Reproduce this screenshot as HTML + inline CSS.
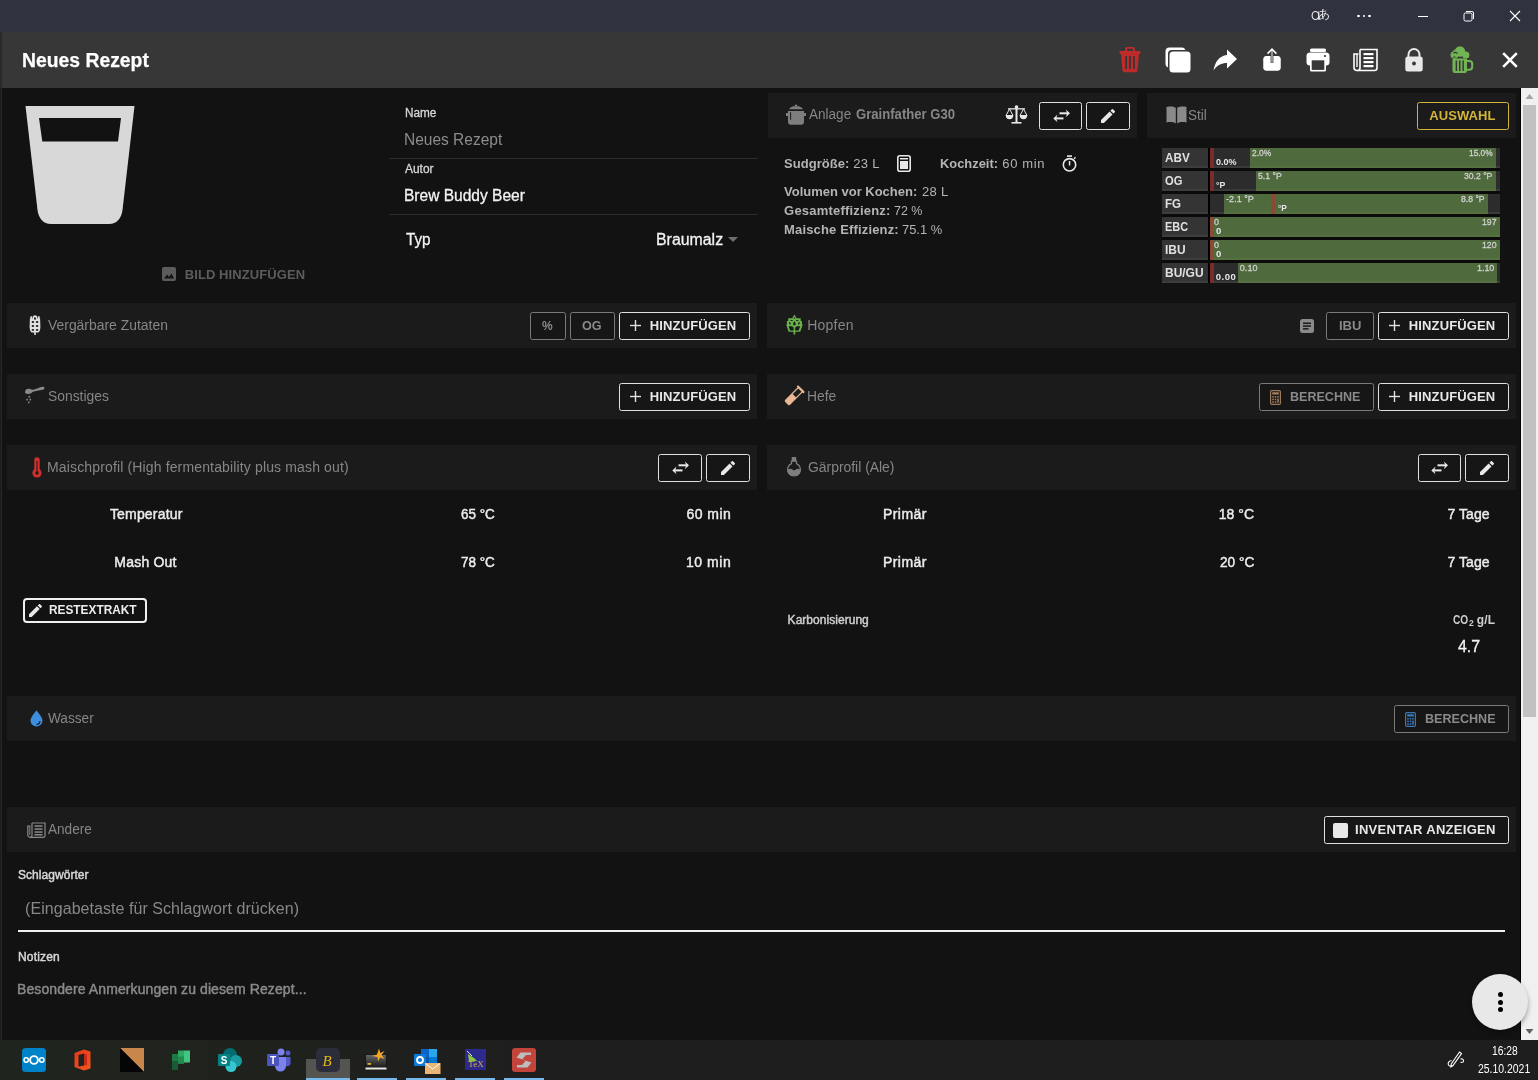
<!DOCTYPE html>
<html><head><meta charset="utf-8"><title>Neues Rezept</title>
<style>
html,body{margin:0;padding:0;width:1538px;height:1080px;overflow:hidden;background:#121212;font-family:'Liberation Sans', sans-serif}
svg{display:block}
</style></head><body><div style="position:absolute;left:0;top:0;width:1538px;height:1080px;will-change:transform">
<div style="position:absolute;left:0px;top:0px;width:1538px;height:32px;background:#30333f;"></div>
<div style="position:absolute;left:0px;top:32px;width:1538px;height:56px;background:#373737;"></div>
<div style="position:absolute;left:0px;top:88px;width:2px;height:952px;background:#1c1c1c;"></div>
<div style="position:absolute;left:1px;top:88px;width:1px;height:952px;background:#262626;"></div>
<div style="position:absolute;left:0px;top:32px;width:2px;height:56px;background:#2a2a2a;"></div>
<div style="position:absolute;left:1520px;top:88px;width:1px;height:952px;background:#000;"></div>
<div style="position:absolute;left:1521px;top:88px;width:17px;height:952px;background:#f0f0f0;"></div>
<div style="position:absolute;left:1523px;top:105px;width:13px;height:612px;background:#c1c1c1;"></div>
<svg style="position:absolute;left:1525px;top:94px;" width="9" height="5" viewBox="0 0 9 5"><path d="M0.5 5 L4.5 0 L8.5 5Z" fill="#a3a3a3"/></svg>
<svg style="position:absolute;left:1525px;top:1029px;" width="9" height="5" viewBox="0 0 9 5"><path d="M0.5 0 L4.5 5 L8.5 0Z" fill="#606060"/></svg>
<div style="position:absolute;left:0px;top:1040px;width:1538px;height:40px;background:linear-gradient(90deg,#20241e 0px,#1f211d 300px,#1e1e1e 560px,#1e1e1e 1538px);"></div>
<div style="position:absolute;left:768px;top:93px;width:369px;height:45px;background:#1b1b1b;"></div>
<div style="position:absolute;left:1147px;top:93px;width:369px;height:45px;background:#1b1b1b;"></div>
<div style="position:absolute;left:7px;top:303px;width:750px;height:45px;background:#1b1b1b;"></div>
<div style="position:absolute;left:767px;top:303px;width:749px;height:45px;background:#1b1b1b;"></div>
<div style="position:absolute;left:7px;top:374px;width:750px;height:45px;background:#1b1b1b;"></div>
<div style="position:absolute;left:767px;top:374px;width:749px;height:45px;background:#1b1b1b;"></div>
<div style="position:absolute;left:7px;top:445px;width:750px;height:45px;background:#1b1b1b;"></div>
<div style="position:absolute;left:767px;top:445px;width:749px;height:45px;background:#1b1b1b;"></div>
<div style="position:absolute;left:7px;top:696px;width:1509px;height:45px;background:#1b1b1b;"></div>
<div style="position:absolute;left:7px;top:807px;width:1509px;height:45px;background:#1b1b1b;"></div>
<svg style="position:absolute;left:1311px;top:10px;" width="10" height="11" viewBox="0 0 10 11"><ellipse cx="4.4" cy="5.5" rx="3.3" ry="4" fill="none" stroke="#f0f0f0" stroke-width="1.1"/><rect x="7.2" y="1.5" width="1.1" height="8.5" fill="#f0f0f0"/></svg>
<div style="position:absolute;left:1357.3px;top:14.8px;width:2.4px;height:2.4px;background:#ffffff;border-radius:50%"></div>
<div style="position:absolute;left:1362.8px;top:14.8px;width:2.4px;height:2.4px;background:#ffffff;border-radius:50%"></div>
<div style="position:absolute;left:1368.3px;top:14.8px;width:2.4px;height:2.4px;background:#ffffff;border-radius:50%"></div>
<div style="position:absolute;left:1418px;top:16px;width:10px;height:1px;background:#ffffff;"></div>
<svg style="position:absolute;left:1463px;top:10px;" width="12" height="12" viewBox="0 0 12 12"><rect x="1" y="3" width="8" height="8" rx="1.5" fill="none" stroke="#fff" stroke-width="1"/><path d="M3 1.5 H9 A1.5 1.5 0 0 1 10.5 3 V9" fill="none" stroke="#fff" stroke-width="1"/></svg>
<svg style="position:absolute;left:1509px;top:10px;" width="12" height="12" viewBox="0 0 12 12"><path d="M1 1 L11 11 M11 1 L1 11" stroke="#fff" stroke-width="1.1"/></svg>
<svg style="position:absolute;left:1119px;top:47px;" width="22" height="26" viewBox="0 0 22 26"><path d="M7 4 V2 A1.5 1.5 0 0 1 8.5 0.8 H13.5 A1.5 1.5 0 0 1 15 2 V4" fill="none" stroke="#bf2a2a" stroke-width="2"/><rect x="0.5" y="4" width="21" height="3" rx="1" fill="#bf2a2a"/><path d="M2 7 H20 L18.5 23.5 A2 2 0 0 1 16.5 25.3 H5.5 A2 2 0 0 1 3.5 23.5 Z" fill="#bf2a2a"/><rect x="6.2" y="9" width="1.8" height="13" fill="#373737"/><rect x="10.1" y="9" width="1.8" height="13" fill="#373737"/><rect x="14" y="9" width="1.8" height="13" fill="#373737"/></svg>
<svg style="position:absolute;left:1165px;top:47px;" width="26" height="26" viewBox="0 0 26 26"><rect x="0.5" y="0.5" width="20" height="20" rx="4" fill="#fff"/><rect x="3" y="3" width="23" height="23" rx="4" fill="#373737"/><rect x="4.5" y="4.5" width="21" height="21" rx="3.5" fill="#fff"/></svg>
<svg style="position:absolute;left:1213px;top:49px;" width="25" height="22" viewBox="0 0 25 22"><path d="M24 10 L14 0.5 V6 C6 7 2 13 0.5 21.5 C4 16 8.5 14 14 14 V19.5 Z" fill="#fff"/></svg>
<svg style="position:absolute;left:1263px;top:48px;" width="18" height="23" viewBox="0 0 18 23"><path d="M5.5 8 H3.2 A2.7 2.7 0 0 0 0.5 10.7 V19.8 A2.7 2.7 0 0 0 3.2 22.5 H14.8 A2.7 2.7 0 0 0 17.5 19.8 V10.7 A2.7 2.7 0 0 0 14.8 8 H12.5" fill="#fff"/><path d="M0.5 11 H17.5 V12 H0.5Z" fill="#fff"/><rect x="0.5" y="9" width="17" height="13.5" rx="2.7" fill="#fff"/><rect x="7.6" y="6" width="2.8" height="9" fill="#373737"/><rect x="8.3" y="2.2" width="1.4" height="12.5" fill="#bdbdbd"/><path d="M4.6 5.6 L9 1.2 L13.4 5.6" fill="none" stroke="#fff" stroke-width="1.6"/></svg>
<svg style="position:absolute;left:1306px;top:48px;" width="24" height="24" viewBox="0 0 24 24"><rect x="4" y="0.5" width="16" height="3.5" rx="1.5" fill="#fff"/><rect x="0.5" y="4.5" width="23" height="13" rx="3.5" fill="#fff"/><rect x="4" y="11" width="16" height="12.5" rx="1.5" fill="#fff"/><rect x="5.7" y="12.3" width="12.6" height="9.6" fill="#373737"/><circle cx="19" cy="8" r="1.1" fill="#373737"/></svg>
<svg style="position:absolute;left:1353px;top:48px;" width="26" height="24" viewBox="0 0 26 24"><path d="M7 1.5 H24 V20 A2.5 2.5 0 0 1 21.5 22.5 H4 A3 3 0 0 1 1 19.5 V6 H5.5" fill="none" stroke="#fff" stroke-width="1.6"/><path d="M7 1.5 V20 A2.5 2.5 0 0 1 4.5 22.5" fill="none" stroke="#fff" stroke-width="1.6"/><path d="M4 6 V19" stroke="#fff" stroke-width="1.4"/><rect x="10.5" y="5" width="10" height="2.2" fill="#fff"/><rect x="10.5" y="9" width="10" height="2.2" fill="#fff"/><rect x="10.5" y="13" width="10" height="2.2" fill="#fff"/><rect x="10.5" y="17" width="10" height="2.2" fill="#fff"/></svg>
<svg style="position:absolute;left:1405px;top:48px;" width="18" height="24" viewBox="0 0 18 24"><path d="M3.5 10 V6.5 A5.5 5.5 0 0 1 14.5 6.5 V10" fill="none" stroke="#e8e8e8" stroke-width="2"/><rect x="0.3" y="8.5" width="17.4" height="15" rx="2.5" fill="#e8e8e8"/><circle cx="9" cy="15.5" r="1.9" fill="#373737"/></svg>
<svg style="position:absolute;left:1450px;top:46px;" width="24" height="28" viewBox="0 0 24 28"><g fill="#72b353"><path d="M2.5 12.5 H17 V24.8 A2.2 2.2 0 0 1 14.8 27 H4.7 A2.2 2.2 0 0 1 2.5 24.8 Z"/><circle cx="4.3" cy="9" r="3.8"/><circle cx="10" cy="5.5" r="5.2"/><circle cx="15.8" cy="9" r="3.6"/><circle cx="6.5" cy="6.5" r="3.3"/></g><path d="M17 15 H19.2 A3 3 0 0 1 22.2 18 V20.8 A3 3 0 0 1 19.2 23.8 H17" fill="none" stroke="#72b353" stroke-width="2.1"/><g fill="#373737"><rect x="5.6" y="14.5" width="1.5" height="10.5"/><rect x="9" y="14.5" width="1.5" height="10.5"/><rect x="12.4" y="14.5" width="1.5" height="10.5"/></g><path d="M3.5 7.5 C4.5 6 6.5 6 7.5 7.8" fill="none" stroke="#363636" stroke-width="1.1"/><path d="M2.5 12 C3.5 11 4.5 10.5 5.5 11.2" fill="none" stroke="#363636" stroke-width="1"/></svg>
<svg style="position:absolute;left:1502px;top:52px;" width="16" height="16" viewBox="0 0 16 16"><path d="M1.2 1.2 L14.8 14.8 M14.8 1.2 L1.2 14.8" stroke="#fff" stroke-width="2.6"/></svg>
<svg style="position:absolute;left:25px;top:106px;" width="110" height="118" viewBox="0 0 110 118"><path d="M0.5 0 H109.5 L97.5 104 C96.5 112 92 118 84 118 H26 C18 118 13.5 112 12.5 104 Z" fill="#d8d8d8"/><path d="M14 12 H96 L93 35.5 H17.3 Z" fill="#121212"/></svg>
<svg style="position:absolute;left:162px;top:267px;" width="14" height="14" viewBox="0 0 14 14"><rect x="0" y="0" width="14" height="14" rx="2" fill="#5c5c5c"/><path d="M2 11.5 L5 7.5 L7 10 L9.5 6.5 L12 11.5 Z" fill="#121212"/></svg>
<div style="position:absolute;left:389px;top:158px;width:369px;height:1px;background:#2c2c2c;"></div>
<div style="position:absolute;left:389px;top:214px;width:369px;height:1px;background:#2c2c2c;"></div>
<svg style="position:absolute;left:728px;top:237px;" width="10" height="5" viewBox="0 0 10 5"><path d="M0 0 H10 L5 5Z" fill="#6e6e6e"/></svg>
<svg style="position:absolute;left:782px;top:101px;" width="28" height="27" viewBox="0 0 28 27"><g fill="#7e7e7e"><ellipse cx="14" cy="4.6" rx="1.3" ry="1"/><path d="M6.8 8.2 Q8.8 5.6 11.2 5.2 H16.8 Q19.2 5.6 21.2 8.2 Z"/><path d="M6 10 H22 V20.8 A3 3 0 0 1 19 23.8 H9 A3 3 0 0 1 6 20.8 Z"/><rect x="4" y="12" width="20" height="3"/></g><rect x="8.1" y="11.2" width="1" height="7.6" fill="#1b1b1b"/></svg>
<svg style="position:absolute;left:1005px;top:105px;" width="23" height="19" viewBox="0 0 23 19"><rect x="10.5" y="1" width="2" height="16" fill="#e8e8e8"/><circle cx="11.5" cy="2" r="1.8" fill="#e8e8e8"/><rect x="3" y="3.2" width="17" height="1.3" fill="#e8e8e8"/><path d="M4.5 4 L1 10.5 H8 Z" fill="none" stroke="#e8e8e8" stroke-width="1"/><path d="M18.5 4 L15 10.5 H22 Z" fill="none" stroke="#e8e8e8" stroke-width="1"/><path d="M0.8 10.5 A3.7 3.7 0 0 0 8.2 10.5 Z" fill="#e8e8e8"/><path d="M14.8 10.5 A3.7 3.7 0 0 0 22.2 10.5 Z" fill="#e8e8e8"/><rect x="6.5" y="17" width="10" height="1.6" fill="#e8e8e8"/></svg>
<div style="position:absolute;left:1039px;top:102px;width:43px;height:28px;box-sizing:border-box;border:1.5px solid #e0e0e0;border-radius:2.5px;background:#161616"></div>
<svg style="position:absolute;left:1052.5px;top:109px;" width="18" height="15" viewBox="0 0 18 15"><g fill="#e8e8e8"><rect x="6.5" y="3.3" width="9" height="2"/><path d="M17 4.3 L12.8 0.4 L14.2 4.3 L12.8 8.2 Z"/><rect x="2.5" y="8.4" width="8" height="2"/><path d="M0.3 9.4 L4.5 5.5 L3.1 9.4 L4.5 13.3 Z"/></g></svg>
<div style="position:absolute;left:1086px;top:102px;width:44px;height:28px;box-sizing:border-box;border:1.5px solid #e0e0e0;border-radius:2.5px;background:#161616"></div>
<svg style="position:absolute;left:1101px;top:109px;" width="14" height="14" viewBox="3 3 18 18"><path d="M20.71,7.04C21.1,6.65 21.1,6 20.71,5.63L18.37,3.29C18,2.9 17.35,2.9 16.96,3.29L15.12,5.12L18.87,8.87M3,17.25V21H6.75L17.81,9.93L14.06,6.18L3,17.25Z" fill="#e8e8e8"/></svg>
<svg style="position:absolute;left:897px;top:155px;" width="14" height="17" viewBox="0 0 14 17"><rect x="0.8" y="0.8" width="12.4" height="15.4" rx="2" fill="none" stroke="#e8e8e8" stroke-width="1.6"/><rect x="3" y="3" width="8" height="1.5" fill="#e8e8e8"/><rect x="3" y="6" width="8" height="8" fill="#e8e8e8"/></svg>
<svg style="position:absolute;left:1062px;top:155px;" width="15" height="17" viewBox="0 0 15 17"><circle cx="7.5" cy="9.8" r="6.2" fill="none" stroke="#e8e8e8" stroke-width="1.6"/><rect x="5" y="0.3" width="5" height="1.6" fill="#e8e8e8"/><rect x="6.8" y="6" width="1.5" height="4.5" fill="#e8e8e8"/><path d="M12 3.8 L13.5 2.3" stroke="#e8e8e8" stroke-width="1.5"/></svg>
<svg style="position:absolute;left:1166px;top:106px;" width="21" height="18" viewBox="0 0 21 18"><path d="M0.5 1 C4 0.2 7.5 0.5 9.8 1.8 V17.5 C7.5 16 4 15.8 0.5 16.5 Z" fill="#8a8a8a"/><path d="M20.5 1 C17 0.2 13.5 0.5 11.2 1.8 V17.5 C13.5 16 17 15.8 20.5 16.5 Z" fill="#8a8a8a"/></svg>
<div style="position:absolute;left:1417px;top:102px;width:92px;height:28px;box-sizing:border-box;border:1.5px solid #d4b43a;border-radius:2.5px;background:#1b1b1b"></div>
<div style="position:absolute;left:1162px;top:168px;width:338px;height:3px;background:#0b0b0b;"></div>
<div style="position:absolute;left:1162px;top:191px;width:338px;height:3px;background:#0b0b0b;"></div>
<div style="position:absolute;left:1162px;top:214px;width:338px;height:3px;background:#0b0b0b;"></div>
<div style="position:absolute;left:1162px;top:237px;width:338px;height:3px;background:#0b0b0b;"></div>
<div style="position:absolute;left:1162px;top:260px;width:338px;height:3px;background:#0b0b0b;"></div>
<div style="position:absolute;left:1162px;top:148px;width:46px;height:18px;background:#343434;"></div>
<div style="position:absolute;left:1162px;top:166px;width:46px;height:2px;background:#3d3d3d;"></div>
<div style="position:absolute;left:1208px;top:148px;width:2px;height:20px;background:#000;"></div>
<div style="position:absolute;left:1210px;top:148px;width:290px;height:18px;background:#2c2c2c;"></div>
<div style="position:absolute;left:1210px;top:166px;width:290px;height:2px;background:#3a3a38;"></div>
<div style="position:absolute;left:1250px;top:148px;width:246px;height:18px;background:#4f6a3c;"></div>
<div style="position:absolute;left:1250px;top:166px;width:246px;height:2px;background:#56713f;"></div>
<div style="position:absolute;left:1210px;top:148px;width:4px;height:20px;background:#7a2c2b;"></div>
<div style="position:absolute;left:1162px;top:171px;width:46px;height:18px;background:#343434;"></div>
<div style="position:absolute;left:1162px;top:189px;width:46px;height:2px;background:#3d3d3d;"></div>
<div style="position:absolute;left:1208px;top:171px;width:2px;height:20px;background:#000;"></div>
<div style="position:absolute;left:1210px;top:171px;width:290px;height:18px;background:#2c2c2c;"></div>
<div style="position:absolute;left:1210px;top:189px;width:290px;height:2px;background:#3a3a38;"></div>
<div style="position:absolute;left:1256px;top:171px;width:240px;height:18px;background:#4f6a3c;"></div>
<div style="position:absolute;left:1256px;top:189px;width:240px;height:2px;background:#56713f;"></div>
<div style="position:absolute;left:1210px;top:171px;width:4px;height:20px;background:#7a2c2b;"></div>
<div style="position:absolute;left:1162px;top:194px;width:46px;height:18px;background:#343434;"></div>
<div style="position:absolute;left:1162px;top:212px;width:46px;height:2px;background:#3d3d3d;"></div>
<div style="position:absolute;left:1208px;top:194px;width:2px;height:20px;background:#000;"></div>
<div style="position:absolute;left:1210px;top:194px;width:290px;height:18px;background:#2c2c2c;"></div>
<div style="position:absolute;left:1210px;top:212px;width:290px;height:2px;background:#3a3a38;"></div>
<div style="position:absolute;left:1224px;top:194px;width:264px;height:18px;background:#4f6a3c;"></div>
<div style="position:absolute;left:1224px;top:212px;width:264px;height:2px;background:#56713f;"></div>
<div style="position:absolute;left:1271px;top:194px;width:4px;height:20px;background:#8a4a33;"></div>
<div style="position:absolute;left:1162px;top:217px;width:46px;height:18px;background:#343434;"></div>
<div style="position:absolute;left:1162px;top:235px;width:46px;height:2px;background:#3d3d3d;"></div>
<div style="position:absolute;left:1208px;top:217px;width:2px;height:20px;background:#000;"></div>
<div style="position:absolute;left:1210px;top:217px;width:290px;height:18px;background:#2c2c2c;"></div>
<div style="position:absolute;left:1210px;top:235px;width:290px;height:2px;background:#3a3a38;"></div>
<div style="position:absolute;left:1210px;top:217px;width:290px;height:18px;background:#4f6a3c;"></div>
<div style="position:absolute;left:1210px;top:235px;width:290px;height:2px;background:#56713f;"></div>
<div style="position:absolute;left:1210px;top:217px;width:4px;height:20px;background:#8a4a33;"></div>
<div style="position:absolute;left:1162px;top:240px;width:46px;height:18px;background:#343434;"></div>
<div style="position:absolute;left:1162px;top:258px;width:46px;height:2px;background:#3d3d3d;"></div>
<div style="position:absolute;left:1208px;top:240px;width:2px;height:20px;background:#000;"></div>
<div style="position:absolute;left:1210px;top:240px;width:290px;height:18px;background:#2c2c2c;"></div>
<div style="position:absolute;left:1210px;top:258px;width:290px;height:2px;background:#3a3a38;"></div>
<div style="position:absolute;left:1210px;top:240px;width:290px;height:18px;background:#4f6a3c;"></div>
<div style="position:absolute;left:1210px;top:258px;width:290px;height:2px;background:#56713f;"></div>
<div style="position:absolute;left:1210px;top:240px;width:4px;height:20px;background:#8a4a33;"></div>
<div style="position:absolute;left:1162px;top:263px;width:46px;height:18px;background:#343434;"></div>
<div style="position:absolute;left:1162px;top:281px;width:46px;height:2px;background:#3d3d3d;"></div>
<div style="position:absolute;left:1208px;top:263px;width:2px;height:20px;background:#000;"></div>
<div style="position:absolute;left:1210px;top:263px;width:290px;height:18px;background:#2c2c2c;"></div>
<div style="position:absolute;left:1210px;top:281px;width:290px;height:2px;background:#3a3a38;"></div>
<div style="position:absolute;left:1238px;top:263px;width:259px;height:18px;background:#4f6a3c;"></div>
<div style="position:absolute;left:1238px;top:281px;width:259px;height:2px;background:#56713f;"></div>
<div style="position:absolute;left:1210px;top:263px;width:4px;height:20px;background:#7a2c2b;"></div>
<svg style="position:absolute;left:29px;top:315px;" width="12" height="20" viewBox="0 0 12 20"><g fill="#e0e0e0"><path d="M0.9 3.5 H11.1 L11.4 12 Q11.2 16.8 9.3 17.4 H2.7 Q0.8 16.8 0.6 12 Z"/><rect x="1.3" y="1.3" width="2" height="3"/><rect x="8.7" y="1.3" width="2" height="3"/><ellipse cx="6" cy="3.2" rx="2.3" ry="2.9"/><rect x="5.2" y="16.5" width="1.6" height="3.5"/></g><g fill="#1b1b1b"><ellipse cx="3.9" cy="7" rx="1.3" ry="0.95"/><ellipse cx="8.1" cy="7" rx="1.3" ry="0.95"/><ellipse cx="3.9" cy="11" rx="1.3" ry="0.95"/><ellipse cx="8.1" cy="11" rx="1.3" ry="0.95"/><ellipse cx="3.9" cy="14.9" rx="1.3" ry="0.95"/><ellipse cx="8.1" cy="14.9" rx="1.3" ry="0.95"/><ellipse cx="6" cy="3.6" rx="0.9" ry="1.3"/></g></svg>
<div style="position:absolute;left:530px;top:312px;width:36px;height:28px;box-sizing:border-box;border:1.2px solid #7a7a7a;border-radius:2.5px;background:#161616"></div>
<div style="position:absolute;left:570px;top:312px;width:45px;height:28px;box-sizing:border-box;border:1.2px solid #7a7a7a;border-radius:2.5px;background:#161616"></div>
<div style="position:absolute;left:619px;top:312px;width:131px;height:28px;box-sizing:border-box;border:1.5px solid #e0e0e0;border-radius:2.5px;background:#161616"></div>
<svg style="position:absolute;left:629.6px;top:319.5px;" width="11" height="11" viewBox="0 0 11 11"><rect x="4.8" y="0" width="1.4" height="11" fill="#e0e0e0"/><rect x="0" y="4.8" width="11" height="1.4" fill="#e0e0e0"/></svg>
<svg style="position:absolute;left:783px;top:312px;" width="24" height="25" viewBox="0 0 24 25"><path d="M11.4 2.6 L13.6 6.2 H17.8 L17.6 8.8 L19 9.2 L18.9 12.3 L19.8 12.6 L17.2 19.8 H12.3 V22.4 H10.5 V19.8 H5.6 L3.2 12.6 L4 12.3 L3.8 9.2 L5.3 8.8 L5.2 6.2 H9.2 Z" fill="#6ab04c"/><g fill="#1b1b1b"><path d="M11.4 4.9 L12.5 6.6 H10.3 Z"/><ellipse cx="8.6" cy="8.5" rx="1.4" ry="0.6"/><ellipse cx="14.2" cy="8.5" rx="1.4" ry="0.6"/><ellipse cx="6.9" cy="11.3" rx="0.7" ry="1.4" transform="rotate(-30 6.9 11.3)"/><ellipse cx="15.9" cy="11.3" rx="0.7" ry="1.4" transform="rotate(30 15.9 11.3)"/><path d="M11.4 9.2 C10.2 10.5 9.8 12 10.4 13 C10.8 13.6 12 13.6 12.4 13 C13 12 12.6 10.5 11.4 9.2Z"/><path d="M5.6 14.3 H9 L10.6 15.6 V18.6 H7.2 Z"/><path d="M17.2 14.3 H13.8 L12.2 15.6 V18.6 H15.6 Z"/></g></svg>
<svg style="position:absolute;left:1300px;top:319px;" width="14" height="14" viewBox="0 0 14 14"><rect x="0" y="0" width="14" height="14" rx="2.5" fill="#8a8a8a"/><rect x="3" y="3.5" width="8" height="1.5" fill="#1b1b1b"/><rect x="3" y="6.3" width="8" height="1.5" fill="#1b1b1b"/><rect x="3" y="9.1" width="5.5" height="1.5" fill="#1b1b1b"/></svg>
<div style="position:absolute;left:1326px;top:312px;width:48px;height:28px;box-sizing:border-box;border:1.2px solid #7a7a7a;border-radius:2.5px;background:#161616"></div>
<div style="position:absolute;left:1378px;top:312px;width:131px;height:28px;box-sizing:border-box;border:1.5px solid #e0e0e0;border-radius:2.5px;background:#161616"></div>
<svg style="position:absolute;left:1388.6px;top:319.5px;" width="11" height="11" viewBox="0 0 11 11"><rect x="4.8" y="0" width="1.4" height="11" fill="#e0e0e0"/><rect x="0" y="4.8" width="11" height="1.4" fill="#e0e0e0"/></svg>
<svg style="position:absolute;left:24px;top:386px;" width="22" height="18" viewBox="0 0 22 18"><path d="M1 6 C1 3 4 2.5 6 3 C7.5 3.3 8.5 4 10 3.5 L14 2.3 C15.5 1.5 17 0.5 19 0.8 C20.5 1 21 2.5 20 3.2 C18.5 4 16 4 14.5 4.5 L10 5.5 C8 6 7 8 4 8 C2 8 1 7.3 1 6Z" fill="#8a8a8a"/><g fill="#8a8a8a"><rect x="4.5" y="10" width="1.6" height="1.6"/><rect x="2.3" y="12.8" width="1.6" height="1.6"/><rect x="5.5" y="12.8" width="1.6" height="1.6"/><rect x="4" y="15.6" width="1.6" height="1.6"/></g></svg>
<div style="position:absolute;left:619px;top:383px;width:131px;height:28px;box-sizing:border-box;border:1.5px solid #e0e0e0;border-radius:2.5px;background:#161616"></div>
<svg style="position:absolute;left:629.6px;top:390.5px;" width="11" height="11" viewBox="0 0 11 11"><rect x="4.8" y="0" width="1.4" height="11" fill="#e0e0e0"/><rect x="0" y="4.8" width="11" height="1.4" fill="#e0e0e0"/></svg>
<svg style="position:absolute;left:783.3px;top:385.3px;" width="22" height="22" viewBox="0 0 22 22"><g transform="rotate(45 11 11)"><rect x="7.5" y="1" width="7" height="20.5" rx="1.6" fill="#e8b894"/><rect x="6.1" y="0.4" width="9.8" height="2.2" rx="0.9" fill="#e8b894"/><rect x="8.7" y="2.6" width="4.6" height="8" fill="#1b1b1b"/></g></svg>
<div style="position:absolute;left:1259px;top:383px;width:115px;height:28px;box-sizing:border-box;border:1.2px solid #7a7a7a;border-radius:2.5px;background:#161616"></div>
<svg style="position:absolute;left:1270px;top:390px;" width="11" height="15" viewBox="0 0 11 15"><rect x="0.6" y="0.6" width="9.8" height="13.8" rx="1.2" fill="none" stroke="#9c7a5c" stroke-width="1.2"/><rect x="2.2" y="2.2" width="6.6" height="2.4" fill="#9c7a5c"/><g fill="#9c7a5c"><rect x="2.2" y="6" width="1.6" height="1.6"/><rect x="4.7" y="6" width="1.6" height="1.6"/><rect x="7.2" y="6" width="1.6" height="1.6"/><rect x="2.2" y="8.6" width="1.6" height="1.6"/><rect x="4.7" y="8.6" width="1.6" height="1.6"/><rect x="7.2" y="8.6" width="1.6" height="4.2"/><rect x="2.2" y="11.2" width="1.6" height="1.6"/><rect x="4.7" y="11.2" width="1.6" height="1.6"/></g></svg>
<div style="position:absolute;left:1378px;top:383px;width:131px;height:28px;box-sizing:border-box;border:1.5px solid #e0e0e0;border-radius:2.5px;background:#161616"></div>
<svg style="position:absolute;left:1388.6px;top:390.5px;" width="11" height="11" viewBox="0 0 11 11"><rect x="4.8" y="0" width="1.4" height="11" fill="#e0e0e0"/><rect x="0" y="4.8" width="11" height="1.4" fill="#e0e0e0"/></svg>
<svg style="position:absolute;left:31.5px;top:457px;" width="10" height="21" viewBox="0 0 10 21"><g fill="#d32f2f"><rect x="2.3" y="0.2" width="5.4" height="15" rx="2.7"/><circle cx="5" cy="16" r="4.6"/></g><g fill="#1b1b1b"><rect x="4.5" y="3.8" width="1" height="11"/><circle cx="5" cy="16" r="1.7"/></g></svg>
<div style="position:absolute;left:658px;top:454px;width:44px;height:28px;box-sizing:border-box;border:1.5px solid #e0e0e0;border-radius:2.5px;background:#161616"></div>
<svg style="position:absolute;left:671.5px;top:461px;" width="18" height="15" viewBox="0 0 18 15"><g fill="#e8e8e8"><rect x="6.5" y="3.3" width="9" height="2"/><path d="M17 4.3 L12.8 0.4 L14.2 4.3 L12.8 8.2 Z"/><rect x="2.5" y="8.4" width="8" height="2"/><path d="M0.3 9.4 L4.5 5.5 L3.1 9.4 L4.5 13.3 Z"/></g></svg>
<div style="position:absolute;left:706px;top:454px;width:44px;height:28px;box-sizing:border-box;border:1.5px solid #e0e0e0;border-radius:2.5px;background:#161616"></div>
<svg style="position:absolute;left:721px;top:461px;" width="14" height="14" viewBox="3 3 18 18"><path d="M20.71,7.04C21.1,6.65 21.1,6 20.71,5.63L18.37,3.29C18,2.9 17.35,2.9 16.96,3.29L15.12,5.12L18.87,8.87M3,17.25V21H6.75L17.81,9.93L14.06,6.18L3,17.25Z" fill="#e8e8e8"/></svg>
<svg style="position:absolute;left:782px;top:452px;" width="24" height="28" viewBox="0 0 24 28"><g fill="#7e7e7e"><rect x="9.7" y="4.9" width="4.5" height="4.3" rx="0.6"/><path d="M5.4 17.6 C7 17 9 16.3 10.5 17.4 C11.5 18.6 12.8 18.6 13.8 17.4 C15.3 16.3 17 17 18.6 17.6 A6.6 6.6 0 0 1 15.8 23.6 H8.2 A6.6 6.6 0 0 1 5.4 17.6Z"/></g><path d="M9.5 9.2 H14.5 V11.6 A6.4 6.4 0 1 1 9.5 11.6 Z" fill="none" stroke="#7e7e7e" stroke-width="1.3"/></svg>
<div style="position:absolute;left:1418px;top:454px;width:43px;height:28px;box-sizing:border-box;border:1.5px solid #e0e0e0;border-radius:2.5px;background:#161616"></div>
<svg style="position:absolute;left:1431px;top:461px;" width="18" height="15" viewBox="0 0 18 15"><g fill="#e8e8e8"><rect x="6.5" y="3.3" width="9" height="2"/><path d="M17 4.3 L12.8 0.4 L14.2 4.3 L12.8 8.2 Z"/><rect x="2.5" y="8.4" width="8" height="2"/><path d="M0.3 9.4 L4.5 5.5 L3.1 9.4 L4.5 13.3 Z"/></g></svg>
<div style="position:absolute;left:1465px;top:454px;width:44px;height:28px;box-sizing:border-box;border:1.5px solid #e0e0e0;border-radius:2.5px;background:#161616"></div>
<svg style="position:absolute;left:1480px;top:461px;" width="14" height="14" viewBox="3 3 18 18"><path d="M20.71,7.04C21.1,6.65 21.1,6 20.71,5.63L18.37,3.29C18,2.9 17.35,2.9 16.96,3.29L15.12,5.12L18.87,8.87M3,17.25V21H6.75L17.81,9.93L14.06,6.18L3,17.25Z" fill="#e8e8e8"/></svg>
<div style="position:absolute;left:23px;top:598px;width:124px;height:25px;box-sizing:border-box;border:2px solid #f0f0f0;border-radius:4px;background:#121212"></div>
<svg style="position:absolute;left:29px;top:604px;" width="13" height="13" viewBox="3 3 18 18"><path d="M20.71,7.04C21.1,6.65 21.1,6 20.71,5.63L18.37,3.29C18,2.9 17.35,2.9 16.96,3.29L15.12,5.12L18.87,8.87M3,17.25V21H6.75L17.81,9.93L14.06,6.18L3,17.25Z" fill="#e8e8e8"/></svg>
<svg style="position:absolute;left:30px;top:710px;" width="13" height="17" viewBox="0 0 13 17"><path d="M6.5 0.5 C6.5 0.5 0.5 7 0.5 10.5 A6 6 0 0 0 12.5 10.5 C12.5 7 6.5 0.5 6.5 0.5Z" fill="#3d8ede"/><path d="M10 11 A3.5 3.5 0 0 1 6.5 14.3" fill="none" stroke="#1b1b1b" stroke-width="1.2"/></svg>
<div style="position:absolute;left:1394px;top:705px;width:115px;height:28px;box-sizing:border-box;border:1.2px solid #7a7a7a;border-radius:2.5px;background:#161616"></div>
<svg style="position:absolute;left:1404.5px;top:711.5px;" width="11" height="15" viewBox="0 0 11 15"><rect x="0.6" y="0.6" width="9.8" height="13.8" rx="1.2" fill="none" stroke="#3b77b5" stroke-width="1.2"/><rect x="2.2" y="2.2" width="6.6" height="2.4" fill="#3b77b5"/><g fill="#3b77b5"><rect x="2.2" y="6" width="1.6" height="1.6"/><rect x="4.7" y="6" width="1.6" height="1.6"/><rect x="7.2" y="6" width="1.6" height="1.6"/><rect x="2.2" y="8.6" width="1.6" height="1.6"/><rect x="4.7" y="8.6" width="1.6" height="1.6"/><rect x="7.2" y="8.6" width="1.6" height="4.2"/><rect x="2.2" y="11.2" width="1.6" height="1.6"/><rect x="4.7" y="11.2" width="1.6" height="1.6"/></g></svg>
<svg style="position:absolute;left:27px;top:822px;" width="19" height="16" viewBox="0 0 19 16"><path d="M5 1 H18 V13.5 A1.8 1.8 0 0 1 16.2 15.3 H3 A2.2 2.2 0 0 1 0.8 13.1 V4 H3.5" fill="none" stroke="#8a8a8a" stroke-width="1.2"/><path d="M5 1 V13.5 A1.8 1.8 0 0 1 3.2 15.3" fill="none" stroke="#8a8a8a" stroke-width="1.2"/><path d="M2.8 4 V13" stroke="#8a8a8a" stroke-width="1"/><g fill="#8a8a8a"><rect x="7.5" y="3.3" width="8" height="1.5"/><rect x="7.5" y="6.3" width="8" height="1.5"/><rect x="7.5" y="9.3" width="8" height="1.5"/><rect x="7.5" y="12" width="8" height="1.5"/></g></svg>
<div style="position:absolute;left:1324px;top:816px;width:185px;height:28px;box-sizing:border-box;border:1.2px solid #e0e0e0;border-radius:2.5px;background:#161616"></div>
<div style="position:absolute;left:1333px;top:822.5px;width:15px;height:15px;background:#e8e8e8;border-radius:2px"></div>
<div style="position:absolute;left:18px;top:930px;width:1487px;height:2px;background:#f0f0f0;"></div>
<div style="position:absolute;left:1472px;top:974px;width:56px;height:56px;border-radius:50%;background:#e8e8e8;box-shadow:0 3px 5px rgba(0,0,0,.35)"></div>
<div style="position:absolute;left:1497.5px;top:991.8px;width:5px;height:5px;background:#000;border-radius:50%"></div>
<div style="position:absolute;left:1497.5px;top:999.5px;width:5px;height:5px;background:#000;border-radius:50%"></div>
<div style="position:absolute;left:1497.5px;top:1007.2px;width:5px;height:5px;background:#000;border-radius:50%"></div>
<svg style="position:absolute;left:1447px;top:1051px;" width="18" height="18" viewBox="0 0 18 18"><path d="M12.5 1 L14.5 2.5 L6 14.5 L4 15.8 L4.3 13 Z" fill="none" stroke="#fff" stroke-width="1.1"/><path d="M4.5 9.5 C1.5 10 0.5 12.5 1.5 14 C2.2 15.2 3.5 15.3 4.5 15" fill="none" stroke="#fff" stroke-width="1.1"/><path d="M13.5 8 C15.5 7.5 17 8.5 16.5 10.5 C16 11.5 14.5 11.5 13.5 11" fill="none" stroke="#fff" stroke-width="1.1"/></svg>
<div style="position:absolute;left:306px;top:1059px;width:44px;height:19px;background:#545450;"></div>
<div style="position:absolute;left:306px;top:1078px;width:44px;height:2px;background:#76b9ed;"></div>
<div style="position:absolute;left:357px;top:1078px;width:40px;height:2px;background:#76b9ed;"></div>
<div style="position:absolute;left:406px;top:1078px;width:40px;height:2px;background:#76b9ed;"></div>
<div style="position:absolute;left:455px;top:1078px;width:40px;height:2px;background:#76b9ed;"></div>
<div style="position:absolute;left:504px;top:1078px;width:40px;height:2px;background:#76b9ed;"></div>
<svg style="position:absolute;left:22px;top:1048px;" width="24" height="24" viewBox="0 0 24 24"><rect x="0" y="0" width="24" height="24" rx="3.5" fill="#0082c9"/><g fill="none" stroke="#fff"><circle cx="12" cy="12" r="3.9" stroke-width="1.9"/><circle cx="4.2" cy="12" r="2.2" stroke-width="1.5"/><circle cx="19.8" cy="12" r="2.2" stroke-width="1.5"/></g></svg>
<svg style="position:absolute;left:74px;top:1049px;" width="17" height="22" viewBox="0 0 17 22"><defs><linearGradient id="og" x1="0" y1="0" x2="1" y2="1"><stop offset="0" stop-color="#e7361f"/><stop offset="1" stop-color="#f05a1a"/></linearGradient></defs><path d="M0.5 4 L10 0.5 L16.5 2.5 V19.5 L10 21.5 L0.5 18 Z" fill="url(#og)"/><path d="M4.5 6 L10 4.5 V16.5 L4.5 17.5 Z" fill="#1f221e"/><path d="M10 4.5 L13 5.5 V16 L10 16.5Z" fill="#c4281c"/></svg>
<svg style="position:absolute;left:120px;top:1048px;" width="24" height="24" viewBox="0 0 24 24"><path d="M0 0 H24 V24 Z" fill="#c8864a"/><path d="M0 0 L24 24 H0 Z" fill="#050505"/></svg>
<svg style="position:absolute;left:172px;top:1050px;" width="18" height="20" viewBox="0 0 18 20"><rect x="0" y="4" width="6" height="15.5" fill="#1e7a45"/><rect x="6" y="0.5" width="6" height="13" fill="#2fa864"/><rect x="12" y="0.5" width="6" height="12" fill="#41c581"/><rect x="0" y="11" width="6" height="8.5" fill="#185c36"/><rect x="6" y="6.5" width="6" height="7" fill="#228c50"/></svg>
<svg style="position:absolute;left:218px;top:1048px;" width="24" height="24" viewBox="0 0 24 24"><circle cx="12" cy="7" r="7" fill="#036c70"/><circle cx="18" cy="13" r="6" fill="#1a9ba1"/><circle cx="13" cy="18.5" r="5.5" fill="#37c6d0"/><rect x="0" y="6" width="12" height="12" rx="1" fill="#038387"/><text x="6" y="15.5" font-family="Liberation Sans" font-weight="700" font-size="10" fill="#fff" text-anchor="middle">S</text></svg>
<svg style="position:absolute;left:267px;top:1048px;" width="24" height="24" viewBox="0 0 24 24"><circle cx="14" cy="4" r="3.5" fill="#7b83eb"/><circle cx="21" cy="5" r="2.5" fill="#5059c9"/><path d="M17.5 9 H23.5 V16 A3.5 3.5 0 0 1 17.5 17Z" fill="#5059c9"/><path d="M8 9 H19 V18 A5.5 5.5 0 0 1 8 18 Z" fill="#7b83eb"/><rect x="0" y="6" width="12" height="12" rx="1" fill="#4b53bc"/><text x="6" y="15.5" font-family="Liberation Sans" font-weight="700" font-size="10" fill="#fff" text-anchor="middle">T</text></svg>
<svg style="position:absolute;left:316px;top:1048px;" width="24" height="24" viewBox="0 0 24 24"><rect x="0" y="0" width="24" height="24" rx="5" fill="#2b2d3a"/><text x="11" y="18" font-family="Liberation Serif" font-style="italic" font-size="15" fill="#e8b810" text-anchor="middle">B</text></svg>
<svg style="position:absolute;left:365px;top:1048px;" width="23" height="23" viewBox="0 0 23 23"><defs><linearGradient id="lg" x1="0" y1="0" x2="0" y2="1"><stop offset="0" stop-color="#6a6a6a"/><stop offset="1" stop-color="#1a1a1a"/></linearGradient></defs><rect x="0.5" y="6.5" width="21" height="13" fill="url(#lg)" stroke="#111" stroke-width="0.8"/><rect x="2.5" y="15" width="3.5" height="1.8" fill="#d8b040"/><rect x="0.5" y="19.5" width="21" height="2" fill="#e8e8e8"/><path d="M14 0.5 L15.3 5 L19.5 3 L16.5 7 L19.5 11 L15 9.5 L13 13.5 L12.5 9 L7 8 L12 6.5 Z" fill="#f5a623"/></svg>
<svg style="position:absolute;left:414px;top:1049px;" width="27" height="25" viewBox="0 0 27 25"><rect x="7" y="0" width="16" height="16" fill="#0a64c8"/><rect x="15" y="0" width="8" height="8" fill="#28a8ea"/><rect x="15" y="8" width="8" height="8" fill="#0078d4"/><rect x="7" y="8" width="8" height="9" fill="#0358a7"/><rect x="0" y="5" width="12" height="12" rx="1" fill="#0f78d4"/><circle cx="6" cy="11" r="3" fill="none" stroke="#fff" stroke-width="1.8"/><rect x="11" y="14" width="15.5" height="11" fill="#eab676"/><path d="M11.5 14.5 L18.7 20 L26 14.5" fill="none" stroke="#fff" stroke-width="1"/></svg>
<svg style="position:absolute;left:465px;top:1049px;" width="21" height="21" viewBox="0 0 21 21"><rect x="0" y="0" width="21" height="21" rx="2" fill="#3a2f9a"/><path d="M0 0 H21 V21 H0Z" fill="#2d2a8e"/><path d="M3 5 L9 9 L12 12 L4 13Z" fill="#8dc63f"/><path d="M2 2 L7 7" stroke="#ddd" stroke-width="1"/><text x="11" y="18" font-family="Liberation Serif" font-size="9" fill="#d8b040" text-anchor="middle">TeX</text></svg>
<svg style="position:absolute;left:512px;top:1048px;" width="24" height="24" viewBox="0 0 24 24"><rect x="0" y="0" width="24" height="24" rx="3" fill="#c2443a"/><path d="M19 4.5 H8.5 L4.5 9.5 L14 12.5 L10 17 H5 V19.5 H15.5 L19.5 14.5 L10 11.5 L14 7 H19 Z" fill="#bdbdbd"/></svg>
<div style="position:absolute;left:1318.00px;top:7px;font:400 12px/14px 'Liberation Sans', sans-serif;color:#f0f0f0;letter-spacing:0.000px;white-space:pre;">あ</div>
<div style="position:absolute;left:22.03px;top:49px;font:700 20px/22px 'Liberation Sans', sans-serif;color:#ffffff;letter-spacing:0.000px;white-space:pre;transform:scaleX(0.9671);transform-origin:0 0;-webkit-text-stroke:0.25px #fff;">Neues Rezept</div>
<div style="position:absolute;left:184.70px;top:267px;font:700 13px/15px 'Liberation Sans', sans-serif;color:#5c5c5c;letter-spacing:0.095px;white-space:pre;">BILD HINZUFÜGEN</div>
<div style="position:absolute;left:405.00px;top:106px;font:400 12px/14px 'Liberation Sans', sans-serif;color:#d6d6d6;letter-spacing:0.000px;white-space:pre;-webkit-text-stroke:0.3px #d6d6d6;transform:scaleX(0.9803);transform-origin:0 0;">Name</div>
<div style="position:absolute;left:404.03px;top:131px;font:400 16px/17px 'Liberation Sans', sans-serif;color:#8c8c8c;letter-spacing:0.000px;white-space:pre;transform:scaleX(0.9688);transform-origin:0 0;">Neues Rezept</div>
<div style="position:absolute;left:405.00px;top:162px;font:400 12px/14px 'Liberation Sans', sans-serif;color:#d6d6d6;letter-spacing:0.000px;white-space:pre;-webkit-text-stroke:0.3px #d6d6d6;transform:scaleX(0.9935);transform-origin:0 0;">Autor</div>
<div style="position:absolute;left:404.03px;top:187px;font:400 16px/17px 'Liberation Sans', sans-serif;color:#f2f2f2;letter-spacing:0.000px;white-space:pre;-webkit-text-stroke:0.3px #f2f2f2;transform:scaleX(0.9712);transform-origin:0 0;">Brew Buddy Beer</div>
<div style="position:absolute;left:405.50px;top:230.6px;font:400 16px/17px 'Liberation Sans', sans-serif;color:#f2f2f2;letter-spacing:0.000px;white-space:pre;-webkit-text-stroke:0.3px #f2f2f2;transform:scaleX(0.9502);transform-origin:0 0;">Typ</div>
<div style="position:absolute;left:655.81px;top:230.6px;font:400 16px/17px 'Liberation Sans', sans-serif;color:#f2f2f2;letter-spacing:0.000px;white-space:pre;-webkit-text-stroke:0.3px #f2f2f2;transform:scaleX(0.9928);transform-origin:0 0;">Braumalz</div>
<div style="position:absolute;left:809.30px;top:106.3px;font:400 14px/16px 'Liberation Sans', sans-serif;color:#868686;letter-spacing:0.000px;white-space:pre;transform:scaleX(0.9679);transform-origin:0 0;">Anlage</div>
<div style="position:absolute;left:856.30px;top:106.3px;font:700 14px/16px 'Liberation Sans', sans-serif;color:#868686;letter-spacing:0.000px;white-space:pre;transform:scaleX(0.9366);transform-origin:0 0;">Grainfather G30</div>
<div style="position:absolute;left:784.10px;top:155.8px;font:700 13px/15px 'Liberation Sans', sans-serif;color:#b4b4b4;letter-spacing:0.042px;white-space:pre;">Sudgröße:</div>
<div style="position:absolute;left:853.20px;top:155.8px;font:400 13px/15px 'Liberation Sans', sans-serif;color:#b4b4b4;letter-spacing:0.343px;white-space:pre;">23 L</div>
<div style="position:absolute;left:939.90px;top:155.8px;font:700 13px/15px 'Liberation Sans', sans-serif;color:#b4b4b4;letter-spacing:0.000px;white-space:pre;transform:scaleX(0.9919);transform-origin:0 0;">Kochzeit:</div>
<div style="position:absolute;left:1002.30px;top:155.8px;font:400 13px/15px 'Liberation Sans', sans-serif;color:#b4b4b4;letter-spacing:0.642px;white-space:pre;">60 min</div>
<div style="position:absolute;left:784.10px;top:183.7px;font:700 13px/15px 'Liberation Sans', sans-serif;color:#b4b4b4;letter-spacing:0.000px;white-space:pre;transform:scaleX(0.9988);transform-origin:0 0;">Volumen vor Kochen:</div>
<div style="position:absolute;left:921.90px;top:183.7px;font:400 13px/15px 'Liberation Sans', sans-serif;color:#b4b4b4;letter-spacing:0.343px;white-space:pre;">28 L</div>
<div style="position:absolute;left:784.10px;top:202.75px;font:700 13px/15px 'Liberation Sans', sans-serif;color:#b4b4b4;letter-spacing:0.195px;white-space:pre;">Gesamteffizienz:</div>
<div style="position:absolute;left:894.20px;top:202.75px;font:400 13px/15px 'Liberation Sans', sans-serif;color:#b4b4b4;letter-spacing:0.000px;white-space:pre;transform:scaleX(0.9610);transform-origin:0 0;">72 %</div>
<div style="position:absolute;left:784.10px;top:221.7px;font:700 13px/15px 'Liberation Sans', sans-serif;color:#b4b4b4;letter-spacing:0.151px;white-space:pre;">Maische Effizienz:</div>
<div style="position:absolute;left:902.40px;top:221.7px;font:400 13px/15px 'Liberation Sans', sans-serif;color:#b4b4b4;letter-spacing:0.000px;white-space:pre;transform:scaleX(0.9923);transform-origin:0 0;">75.1 %</div>
<div style="position:absolute;left:1188.30px;top:107px;font:400 14px/16px 'Liberation Sans', sans-serif;color:#868686;letter-spacing:0.000px;white-space:pre;transform:scaleX(0.9670);transform-origin:0 0;">Stil</div>
<div style="position:absolute;left:1429.30px;top:108px;font:700 13px/15px 'Liberation Sans', sans-serif;color:#d4b43a;letter-spacing:0.071px;white-space:pre;">AUSWAHL</div>
<div style="position:absolute;left:1165.00px;top:150px;font:700 13px/15px 'Liberation Sans', sans-serif;color:#e0e0e0;letter-spacing:0.000px;white-space:pre;transform:scaleX(0.9000);transform-origin:0 0;">ABV</div>
<div style="position:absolute;left:1251.90px;top:148px;font:400 9px/10px 'Liberation Sans', sans-serif;color:#d0d0d0;letter-spacing:0.000px;white-space:pre;-webkit-text-stroke:0.3px #d0d0d0;transform:scaleX(0.9312);transform-origin:0 0;">2.0%</div>
<div style="position:absolute;left:1215.90px;top:156px;font:700 9.5px/11px 'Liberation Sans', sans-serif;color:#e8e8e8;letter-spacing:0.000px;white-space:pre;transform:scaleX(0.9502);transform-origin:0 0;">0.0%</div>
<div style="position:absolute;left:1469.30px;top:148px;font:400 9px/10px 'Liberation Sans', sans-serif;color:#d0d0d0;letter-spacing:0.000px;white-space:pre;-webkit-text-stroke:0.3px #d0d0d0;transform:scaleX(0.9249);transform-origin:0 0;">15.0%</div>
<div style="position:absolute;left:1165.00px;top:173px;font:700 13px/15px 'Liberation Sans', sans-serif;color:#e0e0e0;letter-spacing:0.000px;white-space:pre;transform:scaleX(0.8602);transform-origin:0 0;">OG</div>
<div style="position:absolute;left:1258.00px;top:171px;font:400 9px/10px 'Liberation Sans', sans-serif;color:#d0d0d0;letter-spacing:0.000px;white-space:pre;-webkit-text-stroke:0.3px #d0d0d0;transform:scaleX(0.9630);transform-origin:0 0;">5.1 °P</div>
<div style="position:absolute;left:1216.20px;top:179px;font:700 9.5px/11px 'Liberation Sans', sans-serif;color:#e8e8e8;letter-spacing:0.000px;white-space:pre;transform:scaleX(0.9167);transform-origin:0 0;">°P</div>
<div style="position:absolute;left:1464.20px;top:171px;font:400 9px/10px 'Liberation Sans', sans-serif;color:#d0d0d0;letter-spacing:0.000px;white-space:pre;-webkit-text-stroke:0.3px #d0d0d0;transform:scaleX(0.9556);transform-origin:0 0;">30.2 °P</div>
<div style="position:absolute;left:1165.00px;top:196px;font:700 13px/15px 'Liberation Sans', sans-serif;color:#e0e0e0;letter-spacing:0.000px;white-space:pre;transform:scaleX(0.8862);transform-origin:0 0;">FG</div>
<div style="position:absolute;left:1226.10px;top:194px;font:400 9px/10px 'Liberation Sans', sans-serif;color:#d0d0d0;letter-spacing:0.015px;white-space:pre;-webkit-text-stroke:0.3px #d0d0d0;">-2.1 °P</div>
<div style="position:absolute;left:1277.80px;top:202px;font:700 9.5px/11px 'Liberation Sans', sans-serif;color:#e8e8e8;letter-spacing:0.000px;white-space:pre;transform:scaleX(0.8704);transform-origin:0 0;">°P</div>
<div style="position:absolute;left:1461.00px;top:194px;font:400 9px/10px 'Liberation Sans', sans-serif;color:#d0d0d0;letter-spacing:0.000px;white-space:pre;-webkit-text-stroke:0.3px #d0d0d0;transform:scaleX(0.9589);transform-origin:0 0;">8.8 °P</div>
<div style="position:absolute;left:1165.00px;top:219px;font:700 13px/15px 'Liberation Sans', sans-serif;color:#e0e0e0;letter-spacing:0.000px;white-space:pre;transform:scaleX(0.8411);transform-origin:0 0;">EBC</div>
<div style="position:absolute;left:1214.10px;top:217px;font:400 9px/10px 'Liberation Sans', sans-serif;color:#d0d0d0;letter-spacing:0.000px;white-space:pre;-webkit-text-stroke:0.3px #d0d0d0;">0</div>
<div style="position:absolute;left:1216.00px;top:225px;font:700 9.5px/11px 'Liberation Sans', sans-serif;color:#e8e8e8;letter-spacing:0.000px;white-space:pre;">0</div>
<div style="position:absolute;left:1482.20px;top:217px;font:400 9px/10px 'Liberation Sans', sans-serif;color:#d0d0d0;letter-spacing:0.000px;white-space:pre;-webkit-text-stroke:0.3px #d0d0d0;transform:scaleX(0.9660);transform-origin:0 0;">197</div>
<div style="position:absolute;left:1165.00px;top:242px;font:700 13px/15px 'Liberation Sans', sans-serif;color:#e0e0e0;letter-spacing:0.000px;white-space:pre;transform:scaleX(0.9182);transform-origin:0 0;">IBU</div>
<div style="position:absolute;left:1214.10px;top:240px;font:400 9px/10px 'Liberation Sans', sans-serif;color:#d0d0d0;letter-spacing:0.000px;white-space:pre;-webkit-text-stroke:0.3px #d0d0d0;">0</div>
<div style="position:absolute;left:1216.00px;top:248px;font:700 9.5px/11px 'Liberation Sans', sans-serif;color:#e8e8e8;letter-spacing:0.000px;white-space:pre;">0</div>
<div style="position:absolute;left:1482.20px;top:240px;font:400 9px/10px 'Liberation Sans', sans-serif;color:#d0d0d0;letter-spacing:0.000px;white-space:pre;-webkit-text-stroke:0.3px #d0d0d0;transform:scaleX(0.9660);transform-origin:0 0;">120</div>
<div style="position:absolute;left:1165.00px;top:265px;font:700 13px/15px 'Liberation Sans', sans-serif;color:#e0e0e0;letter-spacing:0.000px;white-space:pre;transform:scaleX(0.9205);transform-origin:0 0;">BU/GU</div>
<div style="position:absolute;left:1239.70px;top:263px;font:400 9px/10px 'Liberation Sans', sans-serif;color:#d0d0d0;letter-spacing:0.096px;white-space:pre;-webkit-text-stroke:0.3px #d0d0d0;">0.10</div>
<div style="position:absolute;left:1215.70px;top:271px;font:700 9.5px/11px 'Liberation Sans', sans-serif;color:#e8e8e8;letter-spacing:0.531px;white-space:pre;">0.00</div>
<div style="position:absolute;left:1477.00px;top:263px;font:400 9px/10px 'Liberation Sans', sans-serif;color:#d0d0d0;letter-spacing:0.000px;white-space:pre;-webkit-text-stroke:0.3px #d0d0d0;transform:scaleX(0.9879);transform-origin:0 0;">1.10</div>
<div style="position:absolute;left:48.10px;top:316.8px;font:400 14px/16px 'Liberation Sans', sans-serif;color:#868686;letter-spacing:0.000px;white-space:pre;transform:scaleX(0.9938);transform-origin:0 0;">Vergärbare Zutaten</div>
<div style="position:absolute;left:542.00px;top:318.7px;font:700 12px/14px 'Liberation Sans', sans-serif;color:#8a8a8a;letter-spacing:0.000px;white-space:pre;">%</div>
<div style="position:absolute;left:582.00px;top:317.7px;font:700 13px/15px 'Liberation Sans', sans-serif;color:#8a8a8a;letter-spacing:0.000px;white-space:pre;transform:scaleX(0.9696);transform-origin:0 0;">OG</div>
<div style="position:absolute;left:649.80px;top:317.7px;font:700 13px/15px 'Liberation Sans', sans-serif;color:#e8e8e8;letter-spacing:0.130px;white-space:pre;">HINZUFÜGEN</div>
<div style="position:absolute;left:807.20px;top:316.8px;font:400 14px/16px 'Liberation Sans', sans-serif;color:#868686;letter-spacing:0.228px;white-space:pre;">Hopfen</div>
<div style="position:absolute;left:1339.00px;top:317.7px;font:700 13px/15px 'Liberation Sans', sans-serif;color:#8a8a8a;letter-spacing:0.000px;white-space:pre;">IBU</div>
<div style="position:absolute;left:1408.80px;top:317.7px;font:700 13px/15px 'Liberation Sans', sans-serif;color:#e8e8e8;letter-spacing:0.130px;white-space:pre;">HINZUFÜGEN</div>
<div style="position:absolute;left:48.20px;top:387.9px;font:400 14px/16px 'Liberation Sans', sans-serif;color:#868686;letter-spacing:0.000px;white-space:pre;transform:scaleX(0.9889);transform-origin:0 0;">Sonstiges</div>
<div style="position:absolute;left:649.80px;top:388.7px;font:700 13px/15px 'Liberation Sans', sans-serif;color:#e8e8e8;letter-spacing:0.130px;white-space:pre;">HINZUFÜGEN</div>
<div style="position:absolute;left:807.01px;top:387.9px;font:400 14px/16px 'Liberation Sans', sans-serif;color:#868686;letter-spacing:0.000px;white-space:pre;transform:scaleX(0.9901);transform-origin:0 0;">Hefe</div>
<div style="position:absolute;left:1290.20px;top:388.7px;font:700 13px/15px 'Liberation Sans', sans-serif;color:#8a8a8a;letter-spacing:0.000px;white-space:pre;transform:scaleX(0.9648);transform-origin:0 0;">BERECHNE</div>
<div style="position:absolute;left:1408.80px;top:388.7px;font:700 13px/15px 'Liberation Sans', sans-serif;color:#e8e8e8;letter-spacing:0.130px;white-space:pre;">HINZUFÜGEN</div>
<div style="position:absolute;left:47.00px;top:458.9px;font:400 14px/16px 'Liberation Sans', sans-serif;color:#868686;letter-spacing:0.144px;white-space:pre;">Maischprofil (High fermentability plus mash out)</div>
<div style="position:absolute;left:808.00px;top:458.9px;font:400 14px/16px 'Liberation Sans', sans-serif;color:#868686;letter-spacing:0.000px;white-space:pre;transform:scaleX(0.9923);transform-origin:0 0;">Gärprofil (Ale)</div>
<div style="position:absolute;left:109.90px;top:505.9px;font:400 14px/16px 'Liberation Sans', sans-serif;color:#ececec;letter-spacing:0.184px;white-space:pre;-webkit-text-stroke:0.45px #ececec;">Temperatur</div>
<div style="position:absolute;left:460.50px;top:505.9px;font:400 14px/16px 'Liberation Sans', sans-serif;color:#ececec;letter-spacing:0.000px;white-space:pre;-webkit-text-stroke:0.45px #ececec;transform:scaleX(0.9612);transform-origin:0 0;">65 °C</div>
<div style="position:absolute;left:686.60px;top:505.9px;font:400 14px/16px 'Liberation Sans', sans-serif;color:#ececec;letter-spacing:0.433px;white-space:pre;-webkit-text-stroke:0.45px #ececec;">60 min</div>
<div style="position:absolute;left:114.30px;top:554px;font:400 14px/16px 'Liberation Sans', sans-serif;color:#ececec;letter-spacing:0.214px;white-space:pre;-webkit-text-stroke:0.45px #ececec;">Mash Out</div>
<div style="position:absolute;left:460.50px;top:554px;font:400 14px/16px 'Liberation Sans', sans-serif;color:#ececec;letter-spacing:0.000px;white-space:pre;-webkit-text-stroke:0.45px #ececec;transform:scaleX(0.9612);transform-origin:0 0;">78 °C</div>
<div style="position:absolute;left:686.00px;top:554px;font:400 14px/16px 'Liberation Sans', sans-serif;color:#ececec;letter-spacing:0.553px;white-space:pre;-webkit-text-stroke:0.45px #ececec;">10 min</div>
<div style="position:absolute;left:49.00px;top:603px;font:700 12.5px/14px 'Liberation Sans', sans-serif;color:#ececec;letter-spacing:0.000px;white-space:pre;transform:scaleX(0.9479);transform-origin:0 0;">RESTEXTRAKT</div>
<div style="position:absolute;left:883.00px;top:505.9px;font:400 14px/16px 'Liberation Sans', sans-serif;color:#ececec;letter-spacing:0.428px;white-space:pre;-webkit-text-stroke:0.45px #ececec;">Primär</div>
<div style="position:absolute;left:1218.80px;top:505.9px;font:400 14px/16px 'Liberation Sans', sans-serif;color:#ececec;letter-spacing:0.035px;white-space:pre;-webkit-text-stroke:0.45px #ececec;">18 °C</div>
<div style="position:absolute;left:1447.60px;top:505.9px;font:400 14px/16px 'Liberation Sans', sans-serif;color:#ececec;letter-spacing:0.030px;white-space:pre;-webkit-text-stroke:0.45px #ececec;">7 Tage</div>
<div style="position:absolute;left:883.00px;top:554px;font:400 14px/16px 'Liberation Sans', sans-serif;color:#ececec;letter-spacing:0.428px;white-space:pre;-webkit-text-stroke:0.45px #ececec;">Primär</div>
<div style="position:absolute;left:1219.80px;top:554px;font:400 14px/16px 'Liberation Sans', sans-serif;color:#ececec;letter-spacing:0.000px;white-space:pre;-webkit-text-stroke:0.45px #ececec;transform:scaleX(0.9755);transform-origin:0 0;">20 °C</div>
<div style="position:absolute;left:1447.60px;top:554px;font:400 14px/16px 'Liberation Sans', sans-serif;color:#ececec;letter-spacing:0.030px;white-space:pre;-webkit-text-stroke:0.45px #ececec;">7 Tage</div>
<div style="position:absolute;left:787.60px;top:612.8px;font:400 12px/14px 'Liberation Sans', sans-serif;color:#cfcfcf;letter-spacing:0.035px;white-space:pre;-webkit-text-stroke:0.45px #cfcfcf;">Karbonisierung</div>
<div style="position:absolute;left:1453.00px;top:612.9px;font:700 12px/14px 'Liberation Sans', sans-serif;color:#cfcfcf;letter-spacing:0.000px;white-space:pre;transform:scaleX(0.8491);transform-origin:0 0;">CO</div>
<div style="position:absolute;left:1469.00px;top:617.6px;font:700 8.5px/10px 'Liberation Sans', sans-serif;color:#cfcfcf;letter-spacing:0.000px;white-space:pre;">2</div>
<div style="position:absolute;left:1476.80px;top:612.9px;font:700 12px/14px 'Liberation Sans', sans-serif;color:#cfcfcf;letter-spacing:0.118px;white-space:pre;">g/L</div>
<div style="position:absolute;left:1458.00px;top:636.9px;font:400 16.5px/18px 'Liberation Sans', sans-serif;color:#f2f2f2;letter-spacing:0.000px;white-space:pre;-webkit-text-stroke:0.3px #f2f2f2;transform:scaleX(0.9666);transform-origin:0 0;">4.7</div>
<div style="position:absolute;left:48.00px;top:709.5px;font:400 14px/16px 'Liberation Sans', sans-serif;color:#868686;letter-spacing:0.000px;white-space:pre;transform:scaleX(0.9732);transform-origin:0 0;">Wasser</div>
<div style="position:absolute;left:1425.00px;top:711px;font:700 13px/15px 'Liberation Sans', sans-serif;color:#8a8a8a;letter-spacing:0.000px;white-space:pre;transform:scaleX(0.9675);transform-origin:0 0;">BERECHNE</div>
<div style="position:absolute;left:48.00px;top:820.5px;font:400 14px/16px 'Liberation Sans', sans-serif;color:#868686;letter-spacing:0.000px;white-space:pre;transform:scaleX(0.9701);transform-origin:0 0;">Andere</div>
<div style="position:absolute;left:1355.00px;top:822px;font:700 13px/15px 'Liberation Sans', sans-serif;color:#e8e8e8;letter-spacing:0.289px;white-space:pre;">INVENTAR ANZEIGEN</div>
<div style="position:absolute;left:18.00px;top:868.2px;font:400 12px/14px 'Liberation Sans', sans-serif;color:#d8d8d8;letter-spacing:0.051px;white-space:pre;-webkit-text-stroke:0.45px #d8d8d8;">Schlagwörter</div>
<div style="position:absolute;left:25.10px;top:900px;font:400 16px/17px 'Liberation Sans', sans-serif;color:#888888;letter-spacing:0.050px;white-space:pre;">(Eingabetaste für Schlagwort drücken)</div>
<div style="position:absolute;left:18.00px;top:949.8px;font:400 12px/14px 'Liberation Sans', sans-serif;color:#d8d8d8;letter-spacing:0.164px;white-space:pre;-webkit-text-stroke:0.45px #d8d8d8;">Notizen</div>
<div style="position:absolute;left:17.00px;top:981px;font:400 14px/16px 'Liberation Sans', sans-serif;color:#8a8a8a;letter-spacing:0.098px;white-space:pre;-webkit-text-stroke:0.45px #8a8a8a;">Besondere Anmerkungen zu diesem Rezept...</div>
<div style="position:absolute;left:1491.90px;top:1043.8px;font:400 12px/14px 'Liberation Sans', sans-serif;color:#ffffff;letter-spacing:0.000px;white-space:pre;transform:scaleX(0.8565);transform-origin:0 0;">16:28</div>
<div style="position:absolute;left:1478.00px;top:1061.8px;font:400 12px/14px 'Liberation Sans', sans-serif;color:#ffffff;letter-spacing:0.000px;white-space:pre;transform:scaleX(0.8694);transform-origin:0 0;">25.10.2021</div>
</div></body></html>
